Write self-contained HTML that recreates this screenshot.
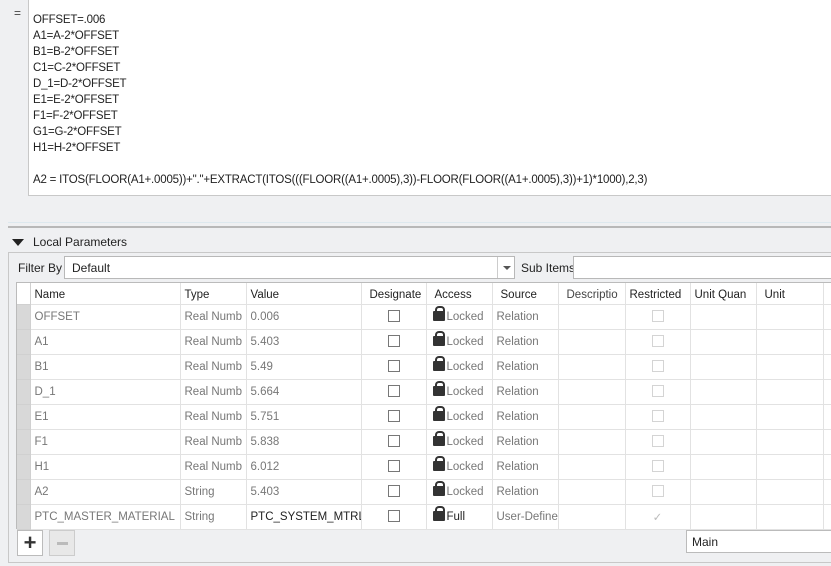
<!DOCTYPE html>
<html><head><style>
*{margin:0;padding:0;box-sizing:border-box}
body{width:831px;height:566px;overflow:hidden;background:#eff0f2;font-family:"Liberation Sans",sans-serif;font-size:12px;color:#222;position:relative}
.a{position:absolute}
.ed{left:28px;top:-1px;width:805px;height:197px;background:#fff;border:1px solid #c8c8c8}
.ed div{position:absolute;left:4px;white-space:nowrap;font-size:11.5px;letter-spacing:-0.2px}
table{border-collapse:collapse;position:absolute;left:17px;top:283px;width:816px;table-layout:fixed;background:#fff}
td{height:25px;border-right:1px solid #e2e2e2;border-bottom:1px solid #e2e2e2;padding-left:4px;white-space:nowrap;overflow:hidden;color:#777;font-size:11.5px}
tr.h td{height:21px;color:#222;background:#fff;padding-top:4px}
td.rh{background:#d8d8d8;border-color:#d0d0d0;padding:0}
.cb{display:inline-block;width:12px;height:12px;border:1px solid #777;vertical-align:middle}
.cbd{border-color:#d4d4d4}
.lk{display:inline-block;width:12px;height:10px;background:#333;border-radius:1px;position:relative;vertical-align:-1px;margin-right:2px}
.lk:before{content:"";position:absolute;left:2px;top:-5px;width:6px;height:6px;border:2px solid #333;border-bottom:none;border-radius:4px 4px 0 0}
</style></head><body>
<div class="a" style="left:14px;top:6px;color:#444">=</div>
<div class="a ed">
<div style="top:14px">OFFSET=.006</div>
<div style="top:30px">A1=A-2*OFFSET</div>
<div style="top:46px">B1=B-2*OFFSET</div>
<div style="top:62px">C1=C-2*OFFSET</div>
<div style="top:78px">D_1=D-2*OFFSET</div>
<div style="top:94px">E1=E-2*OFFSET</div>
<div style="top:110px">F1=F-2*OFFSET</div>
<div style="top:126px">G1=G-2*OFFSET</div>
<div style="top:142px">H1=H-2*OFFSET</div>
<div style="top:174px">A2 = ITOS(FLOOR(A1+.0005))+"."+EXTRACT(ITOS(((FLOOR((A1+.0005),3))-FLOOR(FLOOR((A1+.0005),3))+1)*1000),2,3)</div>
</div>
<div class="a" style="left:8px;top:222px;width:823px;height:1px;background:#dde8ee"></div>
<div class="a" style="left:8px;top:226px;width:823px;height:2px;background:#b8b8b8"></div>
<div class="a" style="left:12px;top:239px;width:0;height:0;border-left:6px solid transparent;border-right:6px solid transparent;border-top:7px solid #222"></div>
<div class="a" style="left:33px;top:235px">Local Parameters</div>
<div class="a" style="left:8px;top:252px;width:830px;height:311px;border:1px solid #c8c8c8"></div>
<div class="a" style="left:18px;top:261px">Filter By</div>
<div class="a" style="left:64px;top:256px;width:451px;height:23px;background:#fff;border:1px solid #b8b8b8;padding:4px 7px">Default</div>
<div class="a" style="left:497px;top:257px;width:1px;height:21px;background:#ccc"></div>
<div class="a" style="left:503px;top:266px;border-left:4px solid transparent;border-right:4px solid transparent;border-top:4px solid #555"></div>
<div class="a" style="left:521px;top:261px">Sub Items</div>
<div class="a" style="left:573px;top:256px;width:260px;height:23px;background:#fff;border:1px solid #b8b8b8"></div>
<div class="a" style="left:16px;top:282px;width:820px;height:247px;border:1px solid #bbb;background:#fff"></div>
<table>
<colgroup><col style="width:13px"><col style="width:150px"><col style="width:66px"><col style="width:115px"><col style="width:65px"><col style="width:66px"><col style="width:66px"><col style="width:67px"><col style="width:65px"><col style="width:66px"><col style="width:67px"><col style="width:10px"></colgroup>
<tr class="h"><td class="rh"></td><td>Name</td><td>Type</td><td>Value</td><td style="padding-left:8px">Designate</td><td style="padding-left:8px">Access</td><td style="padding-left:8px">Source</td><td style="padding-left:8px;color:#444">Descriptio</td><td>Restricted</td><td>Unit Quan</td><td style="padding-left:8px">Unit</td><td></td></tr>
<tr><td class="rh"></td><td>OFFSET</td><td>Real Numb</td><td>0.006</td><td style="text-align:center;padding:0"><span class="cb"></span></td><td style="padding-left:6px"><span class="lk"></span>Locked</td><td>Relation</td><td></td><td style="text-align:center;padding:0"><span class="cb cbd"></span></td><td></td><td></td><td></td></tr>
<tr><td class="rh"></td><td>A1</td><td>Real Numb</td><td>5.403</td><td style="text-align:center;padding:0"><span class="cb"></span></td><td style="padding-left:6px"><span class="lk"></span>Locked</td><td>Relation</td><td></td><td style="text-align:center;padding:0"><span class="cb cbd"></span></td><td></td><td></td><td></td></tr>
<tr><td class="rh"></td><td>B1</td><td>Real Numb</td><td>5.49</td><td style="text-align:center;padding:0"><span class="cb"></span></td><td style="padding-left:6px"><span class="lk"></span>Locked</td><td>Relation</td><td></td><td style="text-align:center;padding:0"><span class="cb cbd"></span></td><td></td><td></td><td></td></tr>
<tr><td class="rh"></td><td>D_1</td><td>Real Numb</td><td>5.664</td><td style="text-align:center;padding:0"><span class="cb"></span></td><td style="padding-left:6px"><span class="lk"></span>Locked</td><td>Relation</td><td></td><td style="text-align:center;padding:0"><span class="cb cbd"></span></td><td></td><td></td><td></td></tr>
<tr><td class="rh"></td><td>E1</td><td>Real Numb</td><td>5.751</td><td style="text-align:center;padding:0"><span class="cb"></span></td><td style="padding-left:6px"><span class="lk"></span>Locked</td><td>Relation</td><td></td><td style="text-align:center;padding:0"><span class="cb cbd"></span></td><td></td><td></td><td></td></tr>
<tr><td class="rh"></td><td>F1</td><td>Real Numb</td><td>5.838</td><td style="text-align:center;padding:0"><span class="cb"></span></td><td style="padding-left:6px"><span class="lk"></span>Locked</td><td>Relation</td><td></td><td style="text-align:center;padding:0"><span class="cb cbd"></span></td><td></td><td></td><td></td></tr>
<tr><td class="rh"></td><td>H1</td><td>Real Numb</td><td>6.012</td><td style="text-align:center;padding:0"><span class="cb"></span></td><td style="padding-left:6px"><span class="lk"></span>Locked</td><td>Relation</td><td></td><td style="text-align:center;padding:0"><span class="cb cbd"></span></td><td></td><td></td><td></td></tr>
<tr><td class="rh"></td><td>A2</td><td>String</td><td>5.403</td><td style="text-align:center;padding:0"><span class="cb"></span></td><td style="padding-left:6px"><span class="lk"></span>Locked</td><td>Relation</td><td></td><td style="text-align:center;padding:0"><span class="cb cbd"></span></td><td></td><td></td><td></td></tr>
<tr><td class="rh"></td><td>PTC_MASTER_MATERIAL</td><td>String</td><td style="color:#222">PTC_SYSTEM_MTRL_</td><td style="text-align:center;padding:0"><span class="cb"></span></td><td style="padding-left:6px;color:#222"><span class="lk"></span>Full</td><td>User-Define</td><td></td><td style="text-align:center;padding:0;color:#bbb">&#10003;</td><td></td><td></td><td></td></tr>
</table>
<div class="a" style="left:17px;top:530px;width:26px;height:26px;background:#fff;border:1px solid #bbb;text-align:center;font-size:22px;font-weight:bold;line-height:24px;color:#333">+</div>
<div class="a" style="left:49px;top:530px;width:26px;height:26px;background:#e8e8e8;border:1px solid #ccc"><div style="position:absolute;left:7px;top:11px;width:11px;height:3px;background:#bbb"></div></div>
<div class="a" style="left:686px;top:530px;width:150px;height:23px;background:#fff;border:1px solid #bbb;padding:4px 5px">Main</div>
</body></html>
